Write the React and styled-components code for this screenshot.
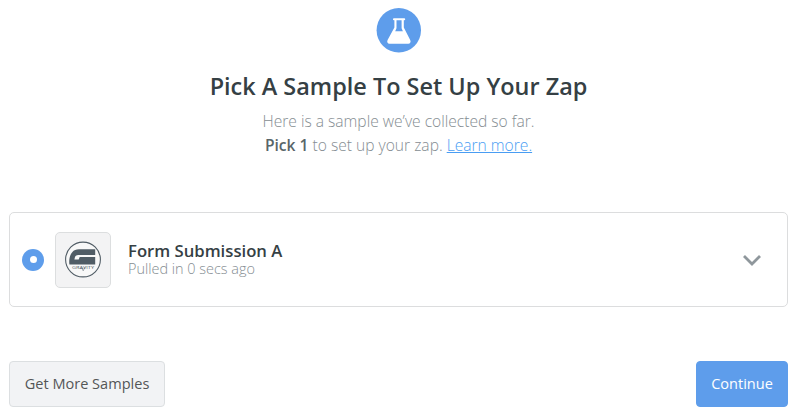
import React, { useState } from 'react';
import styled, { createGlobalStyle } from 'styled-components';

const GlobalStyle = createGlobalStyle`
  * {
    box-sizing: border-box;
  }

  body {
    margin: 0;
    background: #fff;
    font-family: 'Open Sans', sans-serif;
    overflow: hidden;
  }
`;

const Page = styled.div`
  width: 800px;
  height: 414px;
  padding: 8px 12px 0 9px;
  display: flex;
  flex-direction: column;
`;

const Header = styled.header`
  display: flex;
  flex-direction: column;
  align-items: center;
  height: 204px;
`;

const Badge = styled.svg`
  display: block;
  width: 45px;
  height: 45px;
`;

const Title = styled.h1`
  margin: 16px 0 0;
  font-size: 23.45px;
  font-weight: 600;
  line-height: 34px;
  white-space: nowrap;
  color: #354044;
`;

const Intro = styled.p`
  margin: 7px 0 0;
  font-size: 15.6px;
  font-weight: 300;
  line-height: 23.5px;
  text-align: center;
  white-space: nowrap;
  color: #858d92;

  strong {
    font-weight: 600;
    color: #586569;
  }
`;

const Link = styled.a`
  color: #499df3;
  text-decoration: underline;
`;

const SampleCard = styled.div`
  display: flex;
  align-items: center;
  height: 95px;
  padding: 0 25px 0 12px;
  border: 1px solid #dcddde;
  border-radius: 5px;
  background: #fff;
  cursor: pointer;
`;

const Radio = styled.span`
  display: flex;
  align-items: center;
  justify-content: center;
  width: 22px;
  height: 22px;
  border-radius: 50%;
  background: ${props => props.$checked ? '#5e9deb' : '#dcddde'};

  &::after {
    content: '';
    width: 7px;
    height: 7px;
    border-radius: 50%;
    background: #fff;
  }
`;

const AppIcon = styled.div`
  width: 56px;
  height: 56px;
  margin-left: 11px;
  border: 1px solid #dcdedf;
  border-radius: 5px;
  background: #f3f3f4;

  svg {
    display: block;
  }
`;

const SampleInfo = styled.div`
  flex: 1;
  margin-left: 17px;
  padding-top: 1px;
`;

const SampleName = styled.div`
  font-size: 16.7px;
  font-weight: 600;
  line-height: 18px;
  color: #354044;
`;

const SampleTime = styled.div`
  font-size: 14.45px;
  font-weight: 300;
  line-height: 18px;
  color: #858d92;
`;

const Chevron = styled.svg`
  display: block;
  width: 20px;
  height: 14px;
`;

const Actions = styled.div`
  display: flex;
  justify-content: space-between;
  margin-top: 54px;
`;

const Button = styled.button`
  width: 156px;
  height: 46px;
  padding: 0 0 2px;
  border: 1px solid #dcdfe1;
  border-radius: 4px;
  background: #f2f3f5;
  color: #545657;
  font-family: inherit;
  font-size: 14.55px;
  line-height: 20px;
  cursor: pointer;
`;

const PrimaryButton = styled(Button)`
  width: 92px;
  border-color: #5e9deb;
  background: #5e9deb;
  color: #fff;
`;

const FlaskBadge = () => (
  <Badge viewBox="0 0 45 45">
    <circle cx="22.8" cy="22.2" r="22.2" fill="#5e9deb" />
    <path
      d="M18 10.2h10.2c1.4 0 1.4 2 0 2h-.4v7.4l6.4 12.5c1 2 0 3.7-1.9 3.7H13.5c-1.9 0-2.9-1.7-1.9-3.7L18.4 19.6v-7.4H18c-1.4 0-1.4-2 0-2z"
      fill="#fff"
    />
    <path d="M20.5 12.2h5.1v8.1l1.3 2.9h-7.7l1.3-2.9z" fill="#5e9deb" />
  </Badge>
);

const GravityLogo = () => (
  <svg width="54" height="54" viewBox="0 0 54 54">
    <circle cx="27" cy="26.5" r="17.4" fill="#f8f8f8" stroke="#505c65" strokeWidth="1.1" />
    <path
      d="M39.2 16.2v5.8H22.4c-2.2 0-3.2 1-3.6 2.8l-.4 1.8h4.3l1-2.6h15.5v7.6H13.4c-.6-4.6.2-9.4 2.8-12.4 1.8-2.2 3.8-3 6.8-3z"
      fill="#505c65"
    />
    <text
      x="16"
      y="36.3"
      textLength="22"
      lengthAdjust="spacingAndGlyphs"
      fontSize="3.8"
      fontWeight="400"
      fill="#505c65"
    >
      GRAVITY
    </text>
    <path d="M25.5 34l1.7 3.8 2-4.2" fill="none" stroke="#505c65" strokeWidth=".5" />
  </svg>
);

function SamplePicker() {
  const [selected, setSelected] = useState('A');

  return (
    <Page>
      <GlobalStyle />
      <Header>
        <FlaskBadge />
        <Title>Pick A Sample To Set Up Your Zap</Title>
        <Intro>
          Here is a sample we’ve collected so far.<br />
          <strong>Pick 1</strong> to set up your zap. <Link href="#">Learn more.</Link>
        </Intro>
      </Header>

      <SampleCard onClick={() => setSelected('A')}>
        <Radio $checked={selected === 'A'} />
        <AppIcon>
          <GravityLogo />
        </AppIcon>
        <SampleInfo>
          <SampleName>Form Submission A</SampleName>
          <SampleTime>Pulled in 0 secs ago</SampleTime>
        </SampleInfo>
        <Chevron viewBox="0 0 20 14">
          <path d="M2 3l8 8 8-8" fill="none" stroke="#8f979c" strokeWidth="2.8" />
        </Chevron>
      </SampleCard>

      <Actions>
        <Button>Get More Samples</Button>
        <PrimaryButton>Continue</PrimaryButton>
      </Actions>
    </Page>
  );
}

export default SamplePicker;
